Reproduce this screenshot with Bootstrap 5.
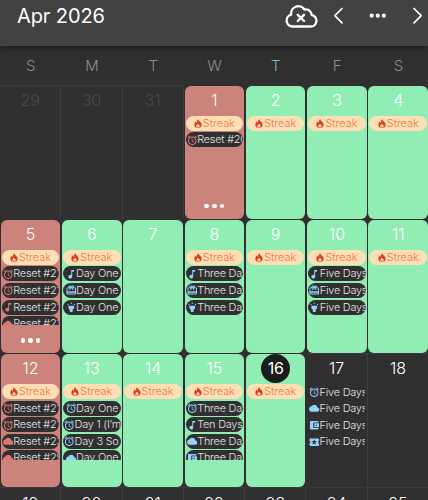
<!DOCTYPE html>
<html lang="en">
<head>
    <meta charset="UTF-8">
    <meta name="viewport" content="width=device-width, initial-scale=1.0">
    <title>Calendar</title>
    <link href="https://cdn.jsdelivr.net/npm/bootstrap@5.3.0/dist/css/bootstrap.min.css" rel="stylesheet">
    <style>
        body {
            background-color: #303030;
            color: #fff;
            font-family: Inter, "Liberation Sans", sans-serif;
            height: 500px;
            overflow: hidden;
        }
        .top-bar {
            height: 45.5px;
            padding: 0 0 14px 17px;
            background-color: #424242;
            box-shadow: 0 2px 6px rgba(0,0,0,0.45);
        }
        .month-title {
            font-size: 20px;
            line-height: 32px;
            letter-spacing: -0.1px;
        }
        .bar-icon {
            fill: none;
            stroke: #fff;
            stroke-linecap: round;
            stroke-linejoin: round;
        }
        .weekday-row, .month-grid {
            display: grid;
            grid-template-columns: repeat(7, 61.3px);
        }
        .weekday-row {
            height: 39.5px;
            font-size: 15px;
            font-weight: 300;
            line-height: 39px;
            color: #8c8c8c;
        }
        .weekday-today {
            color: #7db6d0;
        }
        .month-grid {
            height: 415px;
            grid-auto-rows: 134.2px;
            overflow: hidden;
        }
        .day-cell {
            padding: 0.5px;
            border-top: 1px solid #3a3a3a;
            border-right: 1px solid #3d3d3d;
            margin-top: -0.5px;
        }
        .day-filled {
            border-color: transparent;
            padding: 0 0 0.3px 0.7px;
        }
        .day-body {
            height: 100%;
            border-radius: 6px;
            overflow: hidden;
        }
        .day-green { background-color: #90eeb4; }
        .day-red { background-color: #cb837c; }
        .day-number {
            height: 30.2px;
            font-size: 16px;
            font-weight: 300;
            line-height: 29px;
        }
        .day-muted { color: #4b4b4b; }
        .today-circle {
            width: 29px;
            height: 29px;
            background-color: #1c1c1c;
            font-weight: 400;
            letter-spacing: -0.3px;
        }
        .event-list {
            height: 75.5px;
            padding: 0 1px;
            overflow: hidden;
        }
        .event-pill {
            height: 15px;
            flex: none;
            margin-bottom: 1.6px;
            padding-left: 1.1px;
            border-radius: 7.5px;
            background-color: #303030;
            color: #e4e4e4;
            font-size: 10.9px;
            font-weight: 300;
            line-height: 15px;
            letter-spacing: -0.22px;
            white-space: nowrap;
            overflow: hidden;
        }
        .event-pill svg {
            width: 10.5px;
            height: 10.5px;
            flex: none;
            fill: #92d2fb;
        }
        .day-red .event-pill svg { fill: #de7770; }
        .event-pill.event-inset { padding-left: 2.6px; }
        .event-pill.streak-pill {
            background-color: #fddfb5;
            color: #f0764a;
            justify-content: center;
            padding: 0;
            letter-spacing: 0;
        }
        .event-pill.streak-pill svg {
            width: 8px;
            height: 9px;
            margin-right: 1px;
            fill: #d8401c;
        }
        .more-dots {
            height: 30px;
            gap: 3.5px;
        }
        .more-dots i {
            width: 4.3px;
            height: 4.3px;
            border-radius: 50%;
            background-color: #fff;
        }
    </style>
</head>
<body>
    <svg class="d-none">
        <symbol id="fire" viewBox="3 1 18 21"><path fill-rule="evenodd" d="M12.500 1.500c.2 4 6.500 5.500 7.700 10.500 1 4-.6 7.700-4 9.500h-8.400c-3.400-1.800-5-5.500-4-9.500.5-2.400 2-4.300 3.200-5.200.2 1.700.8 2.700 2 3.400-.2-4 1-7 3.500-8.700zM12 12c-2 2.300-4 4-4 6 0 1.500 1 2.800 2.200 3.500.2-1.800 1-2.800 1.800-3.500.8.700 1.600 1.700 1.800 3.500 1.200-.7 2.200-2 2.200-3.500 0-2-2-3.700-4-6z"/></symbol>
        <symbol id="alarm" viewBox="1 1 22 22"><path d="M22 5.720l-4.600-3.860-1.290 1.530 4.600 3.860L22 5.720zM7.880 3.390L6.600 1.860 2 5.710l1.290 1.530 4.590-3.850zM12.500 8H11v6l4.750 2.850.750-1.230-4-2.370V8zM12 4c-4.970 0-9 4.030-9 9s4.020 9 9 9c4.970 0 9-4.030 9-9s-4.030-9-9-9zm0 16c-3.870 0-7-3.130-7-7s3.130-7 7-7 7 3.130 7 7-3.130 7-7 7z"/></symbol>
        <symbol id="cloud" viewBox="0 0 24 24"><path d="M19.350 10.040C18.670 6.590 15.640 4 12 4 9.110 4 6.600 5.640 5.350 8.040 2.340 8.360 0 10.910 0 14c0 3.310 2.690 6 6 6h13c2.760 0 5-2.240 5-5 0-2.640-2.050-4.780-4.650-4.960z"/></symbol>
        <symbol id="music" viewBox="1 1 22 22"><path d="M12 3v10.550c-.590-.340-1.270-.550-2-.550-2.210 0-4 1.790-4 4s1.790 4 4 4 4-1.790 4-4V7h4V3h-6z"/></symbol>
        <symbol id="gift" viewBox="1 1 22 22"><path d="M20 6h-2.180c.110-.310.180-.650.180-1 0-1.660-1.340-3-3-3-1.050 0-1.960.540-2.500 1.350l-.5.670-.5-.680C10.960 2.540 10.050 2 9 2 7.340 2 6 3.340 6 5c0 .350.070.690.180 1H4c-1.110 0-1.990.890-1.990 2L2 19c0 1.110.890 2 2 2h16c1.110 0 2-.890 2-2V8c0-1.110-.890-2-2-2zm-5-2c.550 0 1 .450 1 1s-.450 1-1 1-1-.450-1-1 .450-1 1-1zM9 4c.550 0 1 .450 1 1s-.450 1-1 1-1-.450-1-1 .450-1 1-1zm11 15H4v-2h16v2zm0-5H4V8h5.080L7 10.830 8.620 12 12 7.400l3.380 4.600L17 10.830 14.920 8H20v6z"/></symbol>
        <symbol id="torch" viewBox="1 1 22 22"><path d="M6 14l3 3v5h6v-5l3-3V9H6zM11 2h2v3h-2zM3.500 5.875L4.914 4.460l2.120 2.122L5.620 7.997zM16.960 6.585l2.123-2.120 1.414 1.414L18.375 8z"/></symbol>
        <symbol id="wallet" viewBox="1 1 22 22"><path d="M21 18v1c0 1.100-.9 2-2 2H5c-1.110 0-2-.9-2-2V5c0-1.100.890-2 2-2h14c1.100 0 2 .9 2 2v1h-9c-1.110 0-2 .9-2 2v8c0 1.100.890 2 2 2h9zm-9-2h10V8H12v8zm4-2.500c-.830 0-1.500-.670-1.500-1.500s.670-1.500 1.500-1.500 1.500.670 1.500 1.500-.670 1.500-1.500 1.500z"/></symbol>
        <symbol id="ticket" viewBox="1 1 22 22"><path d="M20 12c0-1.100.9-2 2-2V6c0-1.100-.9-2-2-2H4c-1.100 0-1.990.9-1.990 2v4c1.100 0 1.990.9 1.990 2s-.890 2-2 2v4c0 1.100.9 2 2 2h16c1.100 0 2-.9 2-2v-4c-1.100 0-2-.9-2-2zm-4.420 4.800L12 14.500l-3.580 2.300 1.080-4.120-3.290-2.690 4.240-.250L12 5.800l1.540 3.950 4.240.250-3.290 2.690 1.090 4.110z"/></symbol>
    </svg>

    <header class="top-bar d-flex align-items-center position-relative">
        <div class="month-title flex-grow-1">Apr 2026</div>
        <svg class="bar-icon" width="34" height="26" viewBox="284 3 34 26" stroke-width="2.3">
            <path d="M292 26.500h18.500a5.800 5.800 0 0 0 1.200-11.500a6 6 0 0 0-7.200-5.500a7.300 7.300 0 0 0-13.300 5.200a6 6 0 0 0 .8 11.800z"/>
            <path d="M297.800 14.800l6.200 6.200M304 14.800l-6.200 6.200" stroke-width="2.400"/>
        </svg>
        <svg class="bar-icon" width="110" height="26" viewBox="318 3 110 26" stroke-width="1.700">
            <path d="M342 8.500l-7.200 7.200 7.200 7.200M414 8.500l7.200 7.200-7.200 7.200"/>
            <g fill="#fff" stroke="none"><circle cx="371.700" cy="15.700" r="2.100"/><circle cx="377.800" cy="15.700" r="2.100"/><circle cx="383.900" cy="15.700" r="2.100"/></g>
        </svg>
    </header>

    <div class="weekday-row text-center">
        <div>S</div><div>M</div><div>T</div><div>W</div><div class="weekday-today">T</div><div>F</div><div>S</div>
    </div>
    <main class="month-grid" id="monthGrid"></main>

    <script>
        // Each event is [icon, title]
        const three = [['music', 'Three Days'], ['gift', 'Three Days'], ['torch', 'Three Days']];
        const days = [
            { day: 29, muted: true }, { day: 30, muted: true }, { day: 31, muted: true },
            { day: 1, fill: 'red', streak: true, more: true, events: [['alarm', 'Reset #20']] },
            { day: 2, fill: 'green', streak: true },
            { day: 3, fill: 'green', streak: true },
            { day: 4, fill: 'green', streak: true },
            { day: 5, fill: 'red', streak: true, more: true, events: [['alarm', 'Reset #21'], ['alarm', 'Reset #21'], ['music', 'Reset #21'], ['cloud', 'Reset #21']] },
            { day: 6, fill: 'green', streak: true, events: [['music', 'Day One'], ['gift', 'Day One'], ['torch', 'Day One']] },
            { day: 7, fill: 'green' },
            { day: 8, fill: 'green', streak: true, events: three },
            { day: 9, fill: 'green', streak: true },
            { day: 10, fill: 'green', streak: true, events: [['music', 'Five Days'], ['gift', 'Five Days'], ['torch', 'Five Days']] },
            { day: 11, fill: 'green', streak: true },
            { day: 12, fill: 'red', streak: true, events: [['alarm', 'Reset #21'], ['alarm', 'Reset #21'], ['cloud', 'Reset #23'], ['cloud', 'Reset #29']] },
            { day: 13, fill: 'green', streak: true, events: [['alarm', 'Day One'], ['alarm', 'Day 1 (I’m'], ['alarm', 'Day 3 So'], ['cloud', 'Day One']] },
            { day: 14, fill: 'green', streak: true },
            { day: 15, fill: 'green', streak: true, events: [['alarm', 'Three Days'], ['music', 'Ten Days'], ['cloud', 'Three Days'], ['wallet', 'Three Days']] },
            { day: 16, fill: 'green', streak: true, today: true },
            { day: 17, events: [['alarm', 'Five Days'], ['cloud', 'Five Days'], ['wallet', 'Five Days'], ['ticket', 'Five Days']] },
            { day: 18 }, { day: 19 }, { day: 20 }, { day: 21 }, { day: 22 }, { day: 23 }, { day: 24 }, { day: 25 }
        ];

        function eventPill(icon, title, extra) {
            return `<div class="event-pill d-flex align-items-center ${extra}"><svg><use href="#${icon}"/></svg><span>${title}</span></div>`;
        }

        function dayCell(d) {
            let pills = d.streak ? eventPill('fire', 'Streak', 'streak-pill') : '';
            (d.events || []).forEach(([icon, title]) => {
                pills += eventPill(icon, title, title === 'Day One' ? 'event-inset' : '');
            });
            const number = d.today ? `<div class="today-circle rounded-circle mx-auto">${d.day}</div>` : d.day;
            return `<div class="day-cell ${d.fill ? 'day-filled' : ''}">
                <div class="day-body ${d.fill ? 'day-' + d.fill : ''}">
                    <div class="day-number text-center ${d.muted ? 'day-muted' : ''}">${number}</div>
                    <div class="event-list d-flex flex-column">${pills}</div>
                    ${d.more ? '<div class="more-dots d-flex justify-content-center align-items-center"><i></i><i></i><i></i></div>' : ''}
                </div>
            </div>`;
        }

        document.getElementById('monthGrid').innerHTML = days.map(dayCell).join('');
    </script>
</body>
</html>
